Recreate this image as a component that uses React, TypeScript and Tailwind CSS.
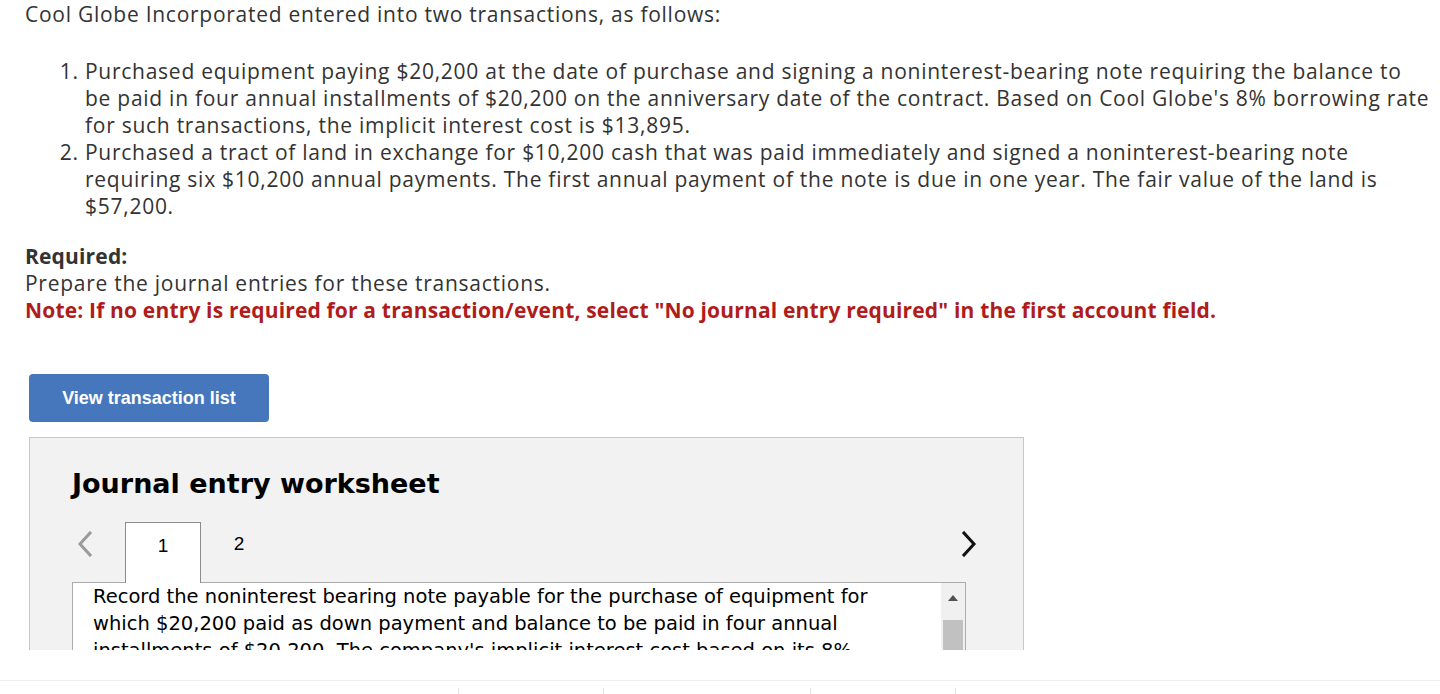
import React from 'react'

const items = [
  [
    'Purchased equipment paying $20,200 at the date of purchase and signing a noninterest-bearing note requiring the balance to',
    "be paid in four annual installments of $20,200 on the anniversary date of the contract. Based on Cool Globe's 8% borrowing rate",
    'for such transactions, the implicit interest cost is $13,895.',
  ],
  [
    'Purchased a tract of land in exchange for $10,200 cash that was paid immediately and signed a noninterest-bearing note',
    'requiring six $10,200 annual payments. The first annual payment of the note is due in one year. The fair value of the land is',
    '$57,200.',
  ],
]

const prompt = [
  'Record the noninterest bearing note payable for the purchase of equipment for',
  'which $20,200 paid as down payment and balance to be paid in four annual',
  "installments of $20,200. The company's implicit interest cost based on its 8%",
  'borrowing rate is $13,895.',
]

function Chevron({ dir, color }: { dir: 'left' | 'right'; color: string }) {
  return (
    <svg width="16" height="26" viewBox="0 0 16 26" fill="none">
      <path
        d={dir === 'left' ? 'M13 2 L3 13 L13 24' : 'M3 2 L13 13 L3 24'}
        stroke={color}
        strokeWidth="3"
        strokeLinecap="square"
      />
    </svg>
  )
}

export default function App() {
  return (
    <div className="bg-white min-h-screen">
      <div className="h-[650px] overflow-hidden">
        <div
          className="pl-[25px] pt-[1px] text-[21px] leading-[27px] text-[#333] tracking-[0.035em] whitespace-nowrap"
          style={{ fontFamily: '"Open Sans", sans-serif' }}
        >
          <p>Cool Globe Incorporated entered into two transactions, as follows:</p>
          <ol className="mt-[30px] pl-[60px] list-decimal">
            {items.map((lines, i) => (
              <li key={i}>
                {lines.map((l, j) => (
                  <span key={j} className="block">
                    {l}
                  </span>
                ))}
              </li>
            ))}
          </ol>
          <p className="mt-[23px] font-bold tracking-[0.008em]">Required:</p>
          <p>Prepare the journal entries for these transactions.</p>
          <p className="font-bold tracking-[0.008em] text-[#b01b1b]">
            Note: If no entry is required for a transaction/event, select "No journal entry required" in the first account field.
          </p>
        </div>

        <div className="pl-[29px] mt-[50px]">
          <button
            className="w-[240px] h-[48px] rounded-[4px] bg-[#4677bd] text-white font-bold text-[18px]"
            style={{ fontFamily: '"Liberation Sans", Arial, sans-serif' }}
          >
            View transaction list
          </button>

          <div className="mt-[15px] w-[995px] border border-[#c8c8c8] bg-[#f2f2f2] pl-[42px] pr-[58px] pt-[28px] h-[260px]">
            <h2
              className="text-[27px] leading-[36px] font-bold text-black"
              style={{ fontFamily: '"DejaVu Sans", Verdana, sans-serif' }}
            >
              Journal entry worksheet
            </h2>

            <div
              className="mt-[19px] flex items-end text-[19px] text-black"
              style={{ fontFamily: '"Liberation Sans", Arial, sans-serif' }}
            >
              <div className="w-[53px] h-[61px] flex items-center pl-[5px] pb-[16px]">
                <Chevron dir="left" color="#9a9a9a" />
              </div>
              <div className="w-[76px] h-[61px] bg-white border border-b-0 border-[#8c8c8c] flex items-center justify-center pb-[14px] relative top-[1px]">
                1
              </div>
              <div className="w-[76px] h-[61px] flex items-center justify-center pb-[14px]">2</div>
              <div className="flex-1" />
              <div className="h-[61px] flex items-center -mr-[12px] pb-[16px]">
                <Chevron dir="right" color="#111" />
              </div>
            </div>

            <div className="w-[894px] h-[120px] bg-white border border-[#acacac] flex">
              <div
                className="flex-1 pl-[20px] text-[19.5px] leading-[27px] text-black whitespace-nowrap"
                style={{ fontFamily: '"DejaVu Sans", Verdana, sans-serif' }}
              >
                {prompt.map((l, i) => (
                  <div key={i}>{l}</div>
                ))}
              </div>
              <div className="w-[24px] bg-[#f0f0f0] flex flex-col items-center pt-[12px]">
                <svg width="10" height="6" viewBox="0 0 10 6">
                  <path d="M0 6 L5 0 L10 6 Z" fill="#505050" />
                </svg>
                <div className="mt-[19px] w-[20px] h-[60px] bg-[#c1c1c1]" />
              </div>
            </div>
          </div>
        </div>
      </div>

      <div className="mt-[30px] border-t border-[#eeeeee] flex pt-[7px]">
        <div className="w-[458px]" />
        <div className="w-[145px] h-[6px] border-l border-[#e4e4e4]" />
        <div className="w-[207px] h-[6px] border-l border-[#e4e4e4]" />
        <div className="w-[145px] h-[6px] border-l border-[#e4e4e4]" />
        <div className="w-[10px] h-[6px] border-l border-[#e4e4e4]" />
      </div>
    </div>
  )
}
